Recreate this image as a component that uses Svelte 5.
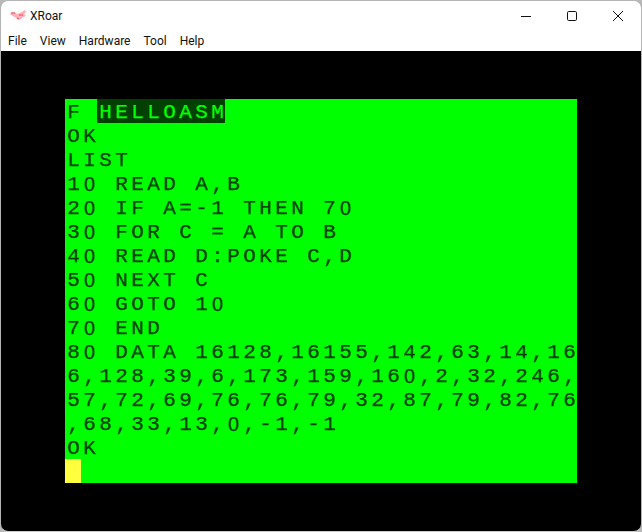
<script>
  const rows = [
    'F HELLOASM',
    'OK',
    'LIST',
    '10 READ A,B',
    '20 IF A=-1 THEN 70',
    '30 FOR C = A TO B',
    '40 READ D:POKE C,D',
    '50 NEXT C',
    '60 GOTO 10',
    '70 END',
    '80 DATA 16128,16155,142,63,14,16',
    '6,128,39,6,173,159,160,2,32,246,',
    '57,72,69,76,76,79,32,87,79,82,76',
    ',68,33,13,0,-1,-1',
    'OK',
    ''
  ];
  const menus = ['File', 'View', 'Hardware', 'Tool', 'Help'];

  // the filename on the first row is shown in inverse video
  function inverse(r, c) {
    return r === 0 && c >= 2;
  }
</script>

<div class="window">
  <div class="titlebar">
    <svg class="app-icon" width="18" height="14" viewBox="0 0 18 14">
      <path d="M1 4 L5 3 L8 5 L11 4 L16 1 L17 3 L15 5 L17 7 L14 8 L12 10 L9 11 L7 9 L4 7 L2 6 Z" fill="#ffb0b8" />
      <path d="M2 4 L6 4 M10 6 L14 6 M8 9 L10 10" stroke="#f04858" stroke-width="1" fill="none" />
    </svg>
    <span class="title">XRoar</span>
    <div class="controls">
      <svg width="10" height="10" viewBox="0 0 10 10"><path d="M0 5.5 H10" stroke="#111" fill="none" /></svg>
      <svg width="10" height="10" viewBox="0 0 10 10"><rect x="0.5" y="0.5" width="9" height="9" rx="1.2" stroke="#111" fill="none" /></svg>
      <svg width="10" height="10" viewBox="0 0 10 10"><path d="M0 0 L10 10 M10 0 L0 10" stroke="#111" fill="none" /></svg>
    </div>
  </div>

  <nav class="menubar">
    {#each menus as m}
      <span class="menu">{m}</span>
    {/each}
  </nav>

  <div class="display">
    <div class="screen">
      {#each rows as row, r}
        <div class="row">
          {#each row as ch, c}
            <span class="cell" class:inv={inverse(r, c)} class:zero={ch === '0'}>{ch}</span>
          {/each}
          {#if r === rows.length - 1}
            <span class="cell cursor"></span>
          {/if}
        </div>
      {/each}
    </div>
  </div>
</div>

<style>
  :global(body) {
    margin: 0;
    background: #b8b8b8;
  }
  .window {
    width: 642px;
    height: 532px;
    box-sizing: border-box;
    display: flex;
    flex-direction: column;
    background: #fff;
    border: 1px solid #b4b4b4;
    border-bottom-color: #c8c8c8;
    border-radius: 8px;
    overflow: hidden;
    font-family: Roboto, "Open Sans", sans-serif;
    font-size: 12px;
    color: #111;
  }
  .titlebar {
    height: 29px;
    display: flex;
    align-items: center;
    padding-left: 8px;
  }
  .app-icon {
    margin-right: 3px;
  }
  .title {
    font-size: 12px;
  }
  .controls {
    margin-left: auto;
    display: flex;
    align-items: center;
  }
  .controls svg {
    width: 10px;
    padding: 0 18px;
  }
  .menubar {
    height: 21px;
    display: flex;
    align-items: center;
    padding-left: 7px;
    gap: 13px;
  }
  .display {
    flex: 1;
    background: #000;
    display: flex;
    align-items: center;
    justify-content: center;
  }
  .screen {
    width: 512px;
    height: 384px;
    background: #00ff00;
    color: #004000;
    font-family: "Liberation Mono", monospace;
    font-size: 21px;
    -webkit-text-stroke: 0.25px currentColor;
  }
  .row {
    height: 24px;
    display: flex;
  }
  .cell {
    width: 16px;
    height: 24px;
    box-sizing: border-box;
    padding-left: 1px;
    flex: none;
    text-align: center;
    line-height: 27px;
    white-space: pre;
  }
  /* the 6847 zero has no dot, unlike the mono face */
  .zero {
    font-family: "Liberation Sans", sans-serif;
    font-size: 20px;
  }
  .inv {
    background: #004000;
    color: #00ff00;
  }
  .cursor {
    background: #ffff40;
  }
</style>
